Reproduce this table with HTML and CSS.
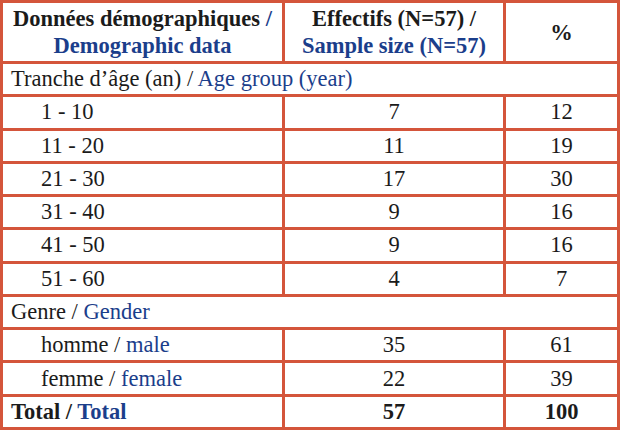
FILE: index.html
```html
<!DOCTYPE html>
<html lang="fr">
<head>
<meta charset="utf-8">
<title>Données démographiques</title>
<link rel="stylesheet" href="styles.css">
</head>
<body>
<table class="data">
  <colgroup>
    <col class="c1">
    <col class="c2">
    <col class="c3">
  </colgroup>
  <thead>
    <tr class="head">
      <th>Données démographiques <span class="en">/</span><br><span class="en">Demographic data</span></th>
      <th>Effectifs (N=57) /<br><span class="en">Sample size (N=57)</span></th>
      <th>%</th>
    </tr>
  </thead>
  <tbody>
    <tr class="group"><td colspan="3">Tranche d’âge (an) / <span class="en">Age group (year)</span></td></tr>
    <tr><td class="sub">1 - 10</td><td class="num">7</td><td class="num">12</td></tr>
    <tr><td class="sub">11 - 20</td><td class="num">11</td><td class="num">19</td></tr>
    <tr><td class="sub">21 - 30</td><td class="num">17</td><td class="num">30</td></tr>
    <tr><td class="sub">31 - 40</td><td class="num">9</td><td class="num">16</td></tr>
    <tr><td class="sub">41 - 50</td><td class="num">9</td><td class="num">16</td></tr>
    <tr><td class="sub">51 - 60</td><td class="num">4</td><td class="num">7</td></tr>
    <tr class="group"><td colspan="3">Genre / <span class="en">Gender</span></td></tr>
    <tr><td class="sub">homme / <span class="en">male</span></td><td class="num">35</td><td class="num">61</td></tr>
    <tr><td class="sub">femme / <span class="en">female</span></td><td class="num">22</td><td class="num">39</td></tr>
    <tr class="total"><td>Total / <span class="en">Total</span></td><td class="num">57</td><td class="num">100</td></tr>
  </tbody>
</table>
</body>
</html>
```

FILE: styles.css
```css
html, body {
  margin: 0;
  padding: 0;
  background: #ffffff;
  font-family: "Liberation Serif", serif;
}

.data {
  width: 620px;
  height: 430px;
  table-layout: fixed;
  border-collapse: separate;
  border-spacing: 3px;
  background: #d4553b;
  font-family: "Liberation Serif", serif;
  font-size: 22.5px;
  color: #1b1b1b;
}

.c1 { width: 279px; }
.c2 { width: 218px; }
.c3 { width: 111px; }

.data th,
.data td {
  font-family: "Liberation Serif", serif;
  background: #ffffff;
  padding: 0;
  line-height: 26px;
  vertical-align: middle;
}

.head th {
  height: 58px;
  font-weight: bold;
  text-align: center;
  line-height: 27px;
}

.data tbody td {
  height: 30px;
}

.en {
  color: #1b3e8b;
}

.group td {
  padding-left: 8px;
  text-align: left;
}

.data td.sub {
  padding-left: 38px;
  text-align: left;
}

.num {
  text-align: center;
}

.total td {
  font-weight: bold;
  padding-left: 8px;
}

.data .total td.num {
  padding-left: 0;
}
```
